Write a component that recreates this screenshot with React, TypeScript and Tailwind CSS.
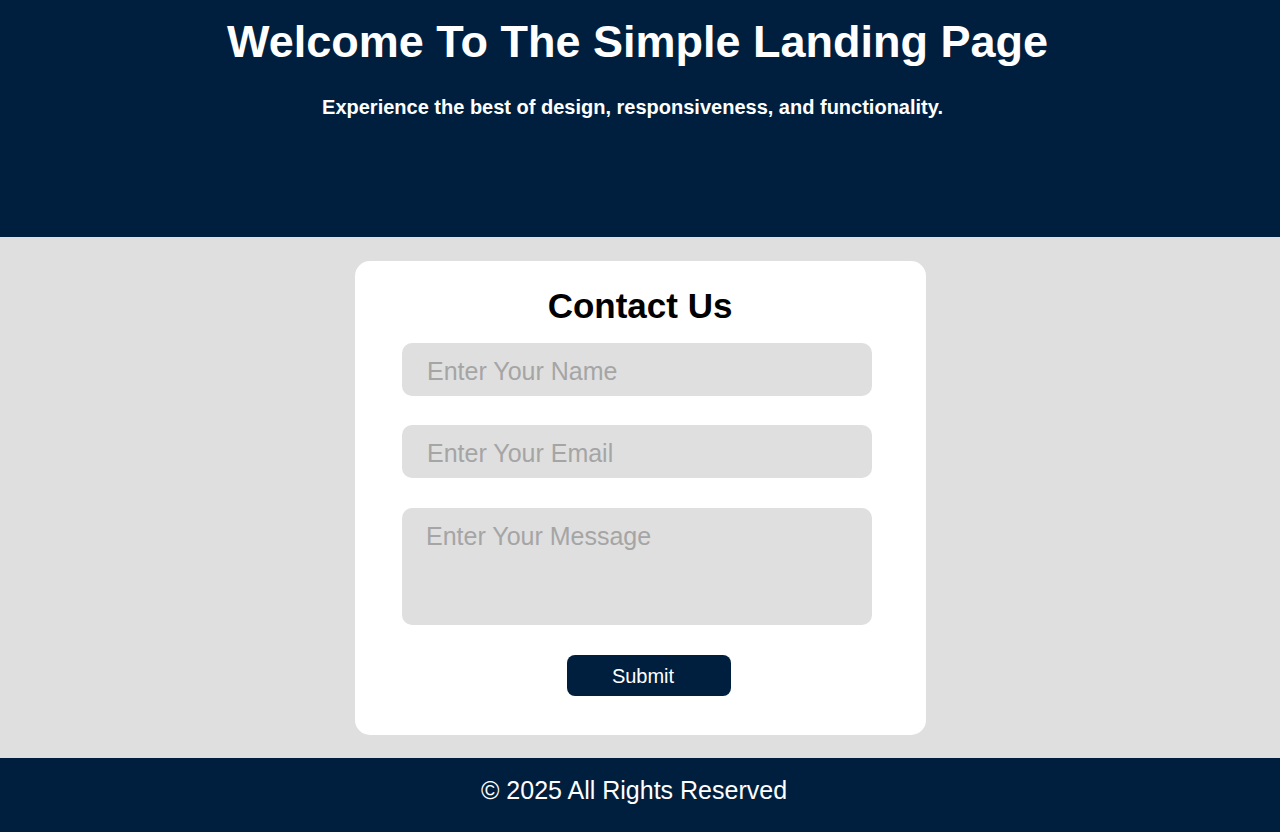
export default function App() {
  return (
    <div className="min-h-[832px] flex flex-col bg-[#dfdfdf] font-['Liberation_Sans',Arial,sans-serif]">
      <header className="h-[237px] bg-[#001f3f] text-white text-center">
        <h1 className="pt-[16px] pr-[5px] text-[45px] leading-[52px] font-bold">Welcome To The Simple Landing Page</h1>
        <p className="mt-[27px] pr-[15px] text-[20px] leading-[24px] font-bold">
          Experience the best of design, responsiveness, and functionality.
        </p>
      </header>

      <main className="flex-1 flex justify-center pt-[24px]">
        <div className="w-[571px] h-[474px] bg-white rounded-[15px] flex flex-col items-center pt-[24px]">
          <h2 className="text-[35px] leading-[42px] font-bold text-black">Contact Us</h2>
          <form className="mt-[16px] flex flex-col items-center">
            <input
              type="text"
              placeholder="Enter Your Name"
              className="-ml-[6px] w-[470px] h-[53px] bg-[#dfdfdf] rounded-[10px] pl-[25px] pt-[3px] text-[25px] placeholder:text-[#a5a5a5] outline-none"
            />
            <input
              type="email"
              placeholder="Enter Your Email"
              className="-ml-[6px] mt-[29px] w-[470px] h-[53px] bg-[#dfdfdf] rounded-[10px] pl-[25px] pt-[3px] text-[25px] placeholder:text-[#a5a5a5] outline-none"
            />
            <textarea
              placeholder="Enter Your Message"
              className="-ml-[6px] mt-[30px] w-[470px] h-[117px] bg-[#dfdfdf] rounded-[10px] pl-[24px] pt-[13px] text-[25px] leading-[30px] resize-none placeholder:text-[#a5a5a5] outline-none"
            />
            <button
              type="button"
              className="ml-[18px] mt-[30px] w-[164px] h-[41px] bg-[#001f3f] text-white rounded-[8px] text-[20px] pr-[12px]"
            >
              Submit
            </button>
          </form>
        </div>
      </main>

      <footer className="mt-[22px] h-[74px] bg-[#001f3f] text-white text-center text-[25px] leading-[64px] pr-[12px]">
        © 2025 All Rights Reserved
      </footer>
    </div>
  );
}
